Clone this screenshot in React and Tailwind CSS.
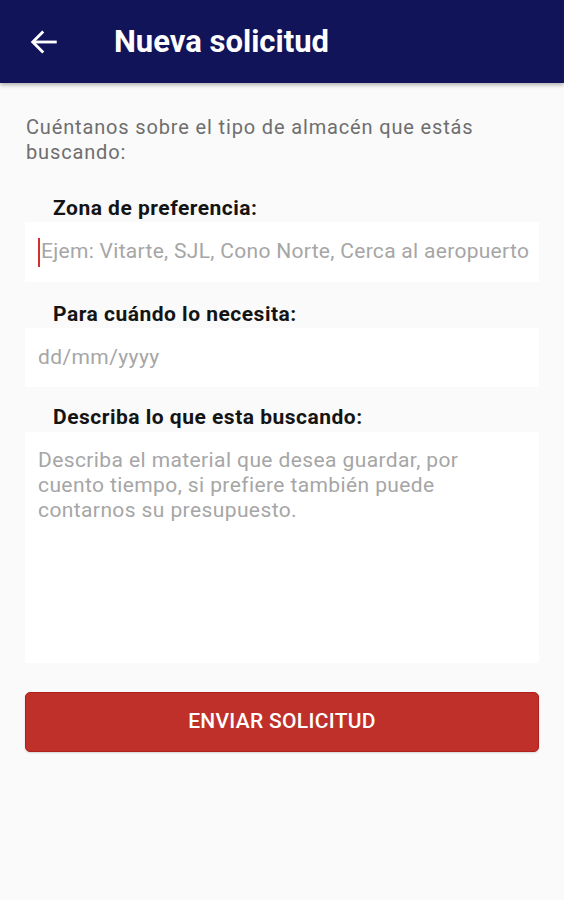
import React from 'react';

function Label({ children, className = '' }) {
  return (
    <label className={`block pl-[28px] text-[21px] leading-[26px] font-bold tracking-[0.5px] text-[#141414] ${className}`}>
      {children}
    </label>
  );
}

export default function App() {
  return (
    <div
      className="min-h-[900px] w-[564px] bg-[#fafafa] flex flex-col"
      style={{ fontFamily: 'Roboto, "Liberation Sans", sans-serif' }}
    >
      {/* Toolbar */}
      <header className="h-[83px] shrink-0 bg-[#12145a] flex items-center shadow-[0_2px_4px_rgba(0,0,0,0.3)] z-10">
        <button className="w-[44px] h-[44px] ml-[22px] flex items-center justify-center text-white">
          <svg width="36" height="36" viewBox="0 0 24 24" fill="none" stroke="currentColor" strokeWidth="1.9" strokeLinecap="butt" strokeLinejoin="miter">
            <line x1="20.5" y1="12" x2="5" y2="12" />
            <polyline points="11.5 5 4.5 12 11.5 19" />
          </svg>
        </button>
        <h1 className="ml-[48px] mt-[2px] text-white text-[31px] font-bold">Nueva solicitud</h1>
      </header>

      <main className="flex flex-col px-[25px] pt-[32px]">
        <p className="text-[20px] leading-[25px] tracking-[0.85px] text-[#6e6e6e] pl-[1px] pr-[10px]">
          Cuéntanos sobre el tipo de almacén que estás buscando:
        </p>

        {/* Zona */}
        <Label className="mt-[30px] mb-[1px]">Zona de preferencia:</Label>
        <div className="h-[60px] bg-white flex items-center pl-[13px]">
          <span className="w-[2px] h-[29px] bg-[#d32f2f] mr-[1px] shrink-0" />
          <span className="text-[21px] tracking-[0.3px] text-[#a6a6a6] whitespace-nowrap">
            Ejem: Vitarte, SJL, Cono Norte, Cerca al aeropuerto
          </span>
        </div>

        {/* Fecha */}
        <Label className="mt-[19px] mb-[1px]">Para cuándo lo necesita:</Label>
        <div className="h-[59px] bg-white flex items-center pl-[13px]">
          <span className="text-[21px] tracking-[0.4px] text-[#a6a6a6]">dd/mm/yyyy</span>
        </div>

        {/* Descripción */}
        <Label className="mt-[17px] mb-[2px]">Describa lo que esta buscando:</Label>
        <div className="h-[231px] bg-white pl-[13px] pr-[60px] pt-[16px]">
          <p className="text-[21px] leading-[25px] tracking-[0.4px] text-[#a6a6a6]">
            Describa el material que desea guardar, por cuento tiempo, si prefiere también puede contarnos su presupuesto.
          </p>
        </div>

        <button className="mt-[29px] h-[60px] w-full rounded-[5px] bg-[#c0302a] border border-[#b01f1b] shadow-[0_1px_2px_rgba(0,0,0,0.15)] text-white text-[21px] font-medium tracking-[0.3px]">
          ENVIAR SOLICITUD
        </button>
      </main>
    </div>
  );
}
